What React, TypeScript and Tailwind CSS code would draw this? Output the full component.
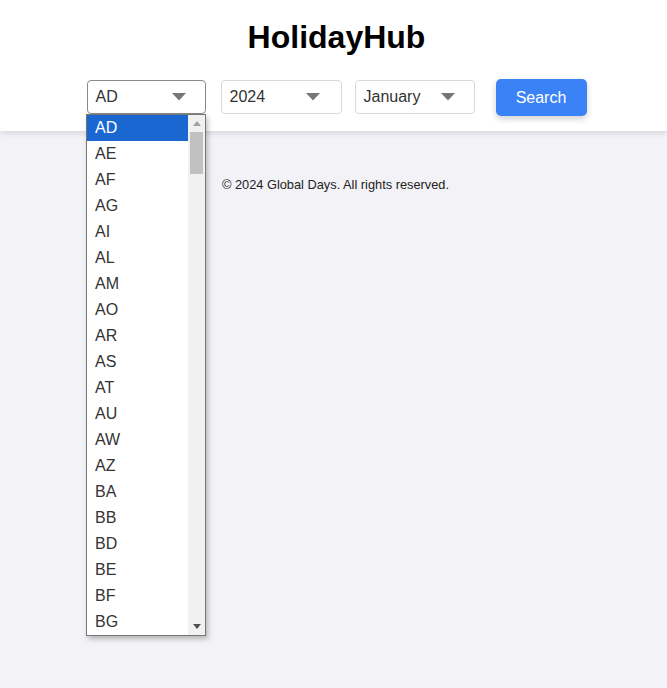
import React from "react";

const codes = ["AD","AE","AF","AG","AI","AL","AM","AO","AR","AS","AT","AU","AW","AZ","BA","BB","BD","BE","BF","BG"];

function Arrow() {
  return (
    <svg width="14" height="8" viewBox="0 0 14 8" className="shrink-0">
      <path d="M0 0 L14 0 L7 7.5 Z" fill="#767676" />
    </svg>
  );
}

function FakeSelect({ value, width, focused, arrowGap }: { value: string; width: string; focused?: boolean; arrowGap: string }) {
  return (
    <div
      className={`${width} h-[34px] mt-[1px] rounded-[4px] bg-white flex items-center pl-[8px] ${arrowGap} text-[16px] text-[#333] ${focused ? "border border-[#8a8a8a]" : "border border-[#d9d9d9]"}`}
    >
      <span className="flex-1">{value}</span>
      <Arrow />
    </div>
  );
}

export default function App() {
  return (
    <div className="min-h-[688px] bg-[#f3f3f7] relative" style={{ fontFamily: '"Liberation Sans", Arial, sans-serif' }}>
      <header className="bg-white shadow-[0_2px_6px_rgba(0,0,0,0.12)] pt-[18px] pb-[15px] h-[131px] pl-[6px]">
        <h1 className="text-center text-[32px] font-bold leading-[38px] text-black">HolidayHub</h1>
        <div className="flex items-start justify-center mt-[23px] h-[38px]">
          <FakeSelect value="AD" width="w-[119px]" focused arrowGap="pr-[19px]" />
          <div className="w-[15px]" />
          <FakeSelect value="2024" width="w-[121px]" arrowGap="pr-[21px]" />
          <div className="w-[13px]" />
          <FakeSelect value="January" width="w-[120px]" arrowGap="pr-[19px]" />
          <div className="w-[21px]" />
          <button className="w-[91px] h-[37px] rounded-[5px] bg-[#3b82f6] text-white text-[16px] shadow-[0_3px_6px_rgba(0,0,0,0.18)]">
            Search
          </button>
        </div>
      </header>
      <footer className="text-center text-[12.8px] text-[#222] pt-[44px] pl-[4px]">
        © 2024 Global Days. All rights reserved.
      </footer>

      <div className="absolute left-[86px] top-[114px] w-[120px] h-[522px] bg-white border border-[#767676] shadow-[2px_3px_5px_rgba(0,0,0,0.25)] flex">
        <div className="flex-1 flex flex-col">
          {codes.map((c, i) => (
            <div
              key={c}
              className={`h-[26px] leading-[26px] pl-[8px] text-[16px] ${i === 0 ? "bg-[#1a67d2] text-white" : "text-[#333]"}`}
            >
              {c}
            </div>
          ))}
        </div>
        <div className="w-[17px] bg-[#f1f1f1] flex flex-col items-center">
          <svg width="8" height="5" viewBox="0 0 8 5" className="mt-[6px]">
            <path d="M0 5 L8 5 L4 0 Z" fill="#a3a3a3" />
          </svg>
          <div className="w-[13px] h-[42px] bg-[#c1c1c1] mt-[6px]" />
          <div className="flex-1" />
          <svg width="8" height="5" viewBox="0 0 8 5" className="mb-[6px]">
            <path d="M0 0 L8 0 L4 5 Z" fill="#505050" />
          </svg>
        </div>
      </div>
    </div>
  );
}
